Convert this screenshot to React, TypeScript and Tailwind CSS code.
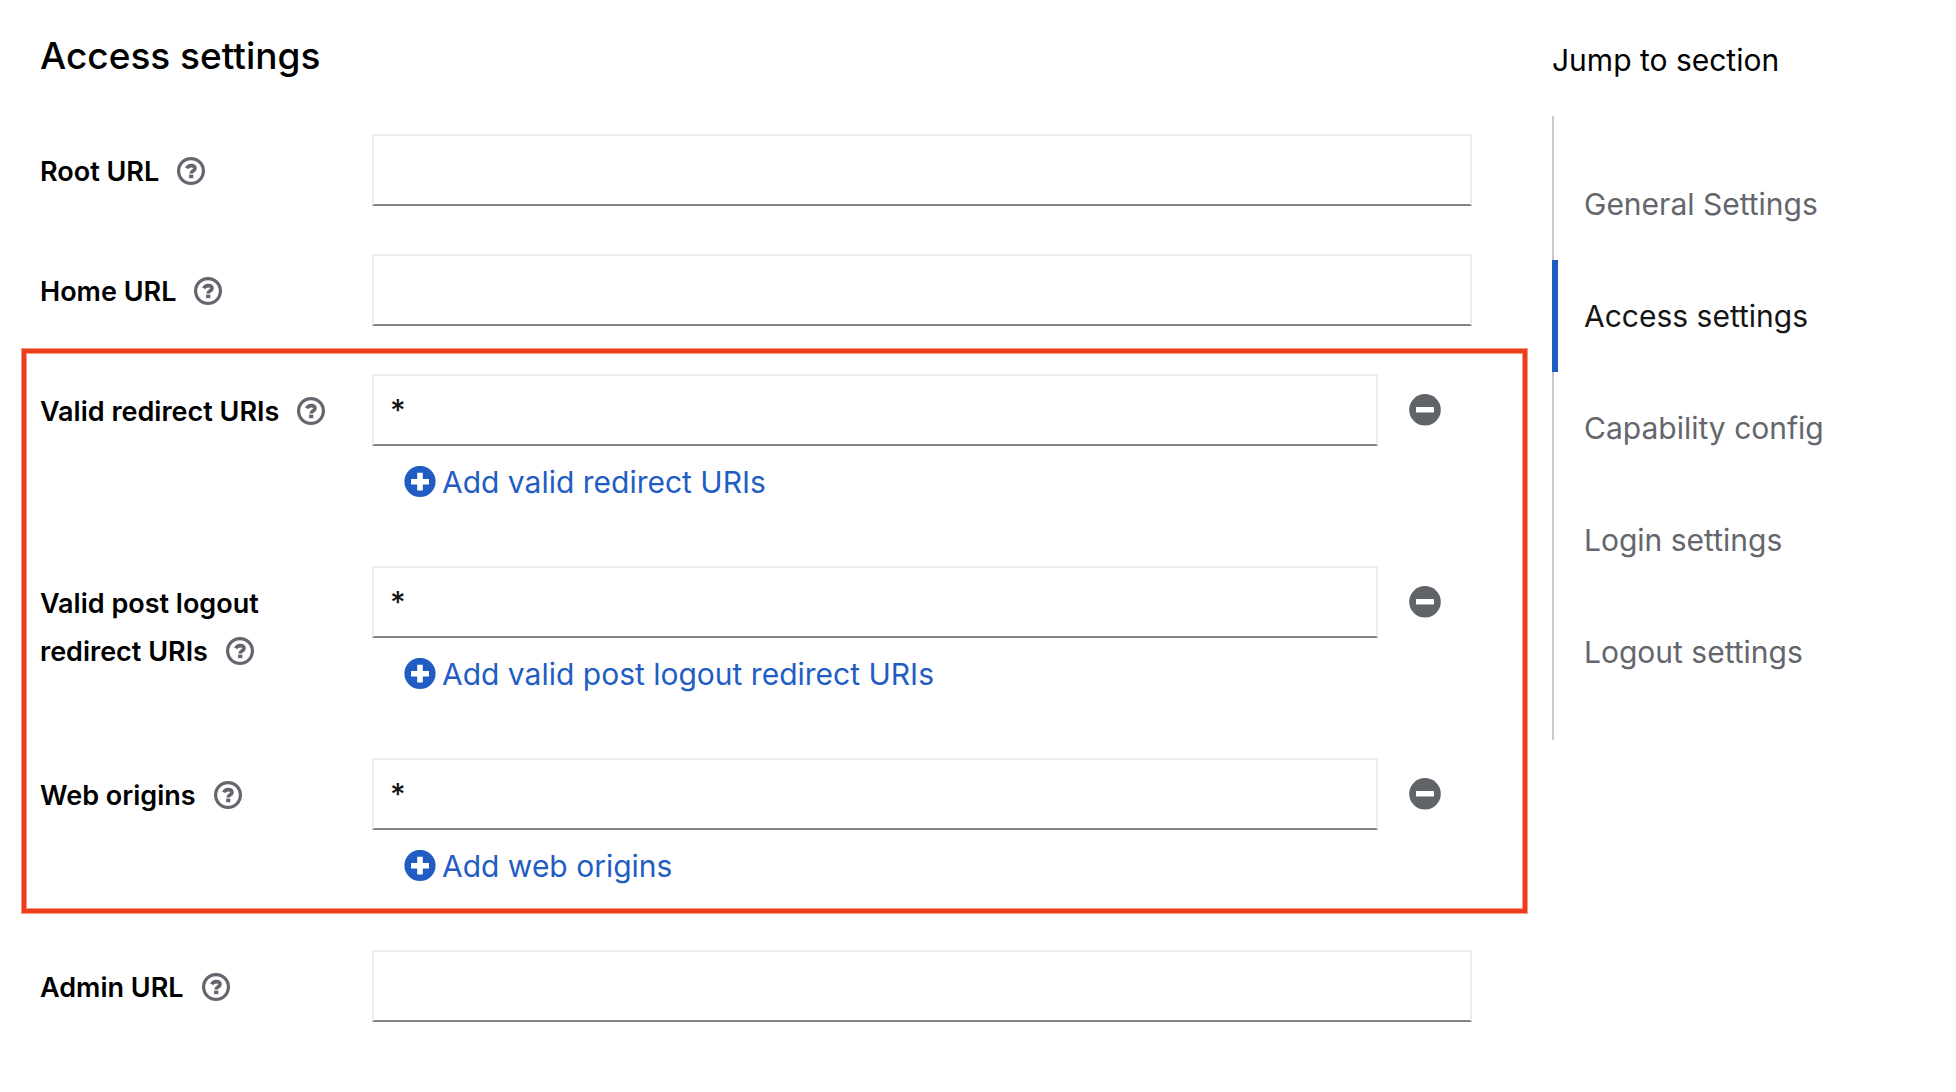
import { useId } from 'react'

const sections = ['General Settings', 'Access settings', 'Capability config', 'Login settings', 'Logout settings']

const inputClass =
  'h-18 w-full min-w-0 border-2 border-[#ededed] border-b-[#84858a] bg-white px-4 text-[30px] leading-12 font-medium text-[#151515] outline-none focus:border-b-[#1f5dc3]'

function HelpIcon() {
  return (
    <svg viewBox="0 0 28 28" className="size-7" fill="none" aria-hidden="true">
      <circle cx="14" cy="14" r="12.4" stroke="currentColor" strokeWidth="3.2" />
      <path
        d="M9.8 11.4C10.6 9.5 12.2 8.6 14.2 8.6C16.5 8.6 18 9.7 18 11.5C18 13.8 14.2 13.9 14.2 16.4"
        stroke="currentColor"
        strokeWidth="3.6"
      />
      <rect x="12.1" y="17.6" width="4.2" height="3.6" fill="currentColor" />
    </svg>
  )
}

function PlusIcon() {
  return (
    <svg viewBox="0 0 32 32" className="size-8 shrink-0" aria-hidden="true">
      <circle cx="16" cy="15.5" r="15.6" fill="currentColor" />
      <path d="M13.2 6.8h5.6v6.2h6.2v5.4h-6.2v6.2h-5.6v-6.2H7v-5.4h6.2z" fill="white" />
    </svg>
  )
}

function MinusIcon() {
  return (
    <svg viewBox="0 0 32 32" className="size-8" aria-hidden="true">
      <circle cx="16" cy="15.8" r="15.8" fill="currentColor" />
      <rect x="7" y="13" width="18" height="5.4" rx="0.6" fill="white" />
    </svg>
  )
}

function FieldLabel({ htmlFor, label }: { htmlFor: string; label: string }) {
  return (
    <div className="pt-3.5 text-[27px] leading-12 font-semibold text-black">
      <label htmlFor={htmlFor}>{label}</label>
      <button type="button" aria-label={`More help for ${label}`} className="ml-[18px] inline-flex align-[-4px] text-[#63666c]">
        <HelpIcon />
      </button>
    </div>
  )
}

const rowClass = 'grid grid-cols-[minmax(0,300px)_minmax(0,1fr)] gap-x-8'

function TextField({ label }: { label: string }) {
  const id = useId()
  return (
    <div className={rowClass}>
      <FieldLabel htmlFor={id} label={label} />
      <input id={id} type="text" className={inputClass} />
    </div>
  )
}

function MultiField({ label, addLabel }: { label: string; addLabel: string }) {
  const id = useId()
  return (
    <div className={rowClass}>
      <FieldLabel htmlFor={id} label={label} />
      <div>
        <div className="flex">
          <input id={id} type="text" defaultValue="*" className={inputClass} />
          <button type="button" aria-label="Remove" className="flex h-18 w-[94px] shrink-0 items-center justify-center text-[#606368]">
            <MinusIcon />
          </button>
        </div>
        <button type="button" className="flex items-center gap-1.5 px-8 py-3 text-left text-[30px] leading-12 text-[#1f5dc3]">
          <PlusIcon />
          {addLabel}
        </button>
      </div>
    </div>
  )
}

export default function App() {
  return (
    <div className="flex min-h-screen bg-white font-['Inter',sans-serif]">
      <main className="min-w-0 flex-1 pt-[30px] pr-20 pl-10">
        <h1 className="text-[37px] leading-[52px] font-medium text-black">Access settings</h1>
        <form className="mt-13 flex flex-col gap-12">
          <TextField label="Root URL" />
          <TextField label="Home URL" />
          <div className="relative flex flex-col gap-12">
            <MultiField label="Valid redirect URIs" addLabel="Add valid redirect URIs" />
            <MultiField label="Valid post logout redirect URIs" addLabel="Add valid post logout redirect URIs" />
            <MultiField label="Web origins" addLabel="Add web origins" />
            <div
              aria-hidden="true"
              className="pointer-events-none absolute -top-[25px] -right-[55px] -bottom-[11px] -left-[18px] border-4 border-[#ed3d1c] shadow-[0_0_0_1px_#f59a86,inset_0_0_0_1px_#f59a86]"
            />
          </div>
          <TextField label="Admin URL" />
        </form>
      </main>
      <nav aria-labelledby="jump-title" className="w-[404px] shrink-0 pt-9 text-[30px] leading-12">
        <h2 id="jump-title" className="text-black">Jump to section</h2>
        <ul className="mt-8 border-l-2 border-[#cacaca] py-8">
          {sections.map((name) => {
            const current = name === 'Access settings'
            return (
              <li key={name}>
                <a
                  href="#"
                  aria-current={current ? 'true' : undefined}
                  className={
                    current
                      ? '-ml-0.5 block border-l-6 border-[#1f5dc3] py-8 pl-[26px] text-[#151515]'
                      : '-ml-0.5 block py-8 pl-8 text-[#63666c]'
                  }
                >
                  {name}
                </a>
              </li>
            )
          })}
        </ul>
      </nav>
    </div>
  )
}
